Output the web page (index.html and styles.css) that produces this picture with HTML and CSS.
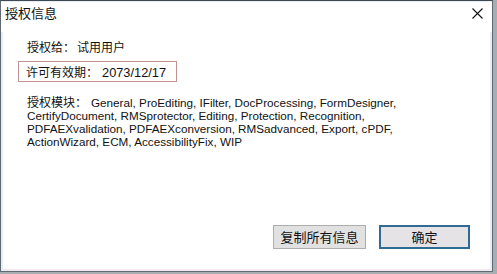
FILE: index.html
```html
<!DOCTYPE html>
<html>
<head>
<meta charset="utf-8">
<link rel="stylesheet" href="styles.css">
</head>
<body>
<div class="window">
  <div class="titlebar">
    <span class="title">授权信息</span>
    <svg class="close" width="11" height="11" viewBox="0 0 11 11"><path d="M0.5 0.5 L10.5 10.5 M10.5 0.5 L0.5 10.5" stroke="#111" stroke-width="1.1" fill="none"/></svg>
  </div>
  <div class="content">
    <div class="row owner">授权给：<span class="gap"></span>试用用户</div>
    <div class="expiry">许可有效期：<span class="gap"></span><span class="date">2073/12/17</span></div>
    <div class="modules"><span class="label">授权模块：</span><span class="gap2"></span>General, ProEditing, IFilter, DocProcessing, FormDesigner,<br>CertifyDocument, RMSprotector, Editing, Protection, Recognition,<br>PDFAEXvalidation, PDFAEXconversion, RMSadvanced, Export, cPDF,<br>ActionWizard, ECM, AccessibilityFix, WIP</div>
  </div>
  <div class="buttons">
    <button class="btn">复制所有信息</button>
    <button class="btn primary">确定</button>
  </div>
</div>
</body>
</html>
```
FILE: styles.css
```css
html, body {
  margin: 0;
  padding: 0;
}
body {
  width: 497px;
  height: 274px;
  background: #a7adb1;
  font-family: "Liberation Sans", "Noto Sans CJK SC", sans-serif;
  font-size: 12px;
  color: #111;
  overflow: hidden;
}
.window {
  box-sizing: border-box;
  width: 493px;
  height: 272px;
  border: 1px solid #5f6a72;
  border-top-color: #3e4a52;
  background: #fff;
  display: flex;
  flex-direction: column;
  box-shadow: inset 2px 0 0 #e3eef6, inset -2px 0 0 #e3eef6, inset 0 -2px 0 #f2e8ee;
}
.titlebar {
  box-sizing: border-box;
  height: 31px;
  display: flex;
  align-items: flex-start;
  justify-content: space-between;
  padding: 3px 9px 0 4px;
  font-family: "Noto Sans CJK SC", sans-serif;
  font-size: 13px;
  line-height: 16px;
  background: #fff;
  border-top: 1px solid #e6edf2;
}
.close {
  margin-top: 3px;
}
.content {
  flex: 1;
  padding: 7px 0 0 26px;
  font-family: "Noto Sans CJK SC", sans-serif;
}
.row {
  line-height: 16px;
}
.gap { display: inline-block; width: 2px; }
.gap2 { display: inline-block; width: 4px; }
.date {
  font-family: "Liberation Sans", sans-serif;
  font-size: 12.8px;
  margin-left: 2px;
}
.expiry {
  margin: 6px 0 0 -9px;
  width: 159px;
  height: 21px;
  box-sizing: border-box;
  border: 1px solid #c49293;
  padding-left: 7px;
  line-height: 19px;
}
.modules {
  margin-top: 13px;
  font-family: "Liberation Sans", "Noto Sans CJK SC", sans-serif;
  font-size: 11.7px;
  line-height: 13px;
}
.label {
  font-family: "Noto Sans CJK SC", sans-serif;
  font-size: 12px;
  line-height: 13px;
}
.buttons {
  display: flex;
  justify-content: flex-end;
  gap: 13px;
  padding: 0 22px 22px 0;
}
.btn {
  width: 93px;
  height: 24px;
  box-sizing: border-box;
  background: #e1e1e1;
  border: 1px solid #adadad;
  font-family: "Noto Sans CJK SC", sans-serif;
  font-size: 13px;
  color: #111;
  padding: 0;
  line-height: 20px;
}
.primary {
  width: 91px;
  border: 2px solid #2f6b92;
  background: #e5e3e6;
}
```
